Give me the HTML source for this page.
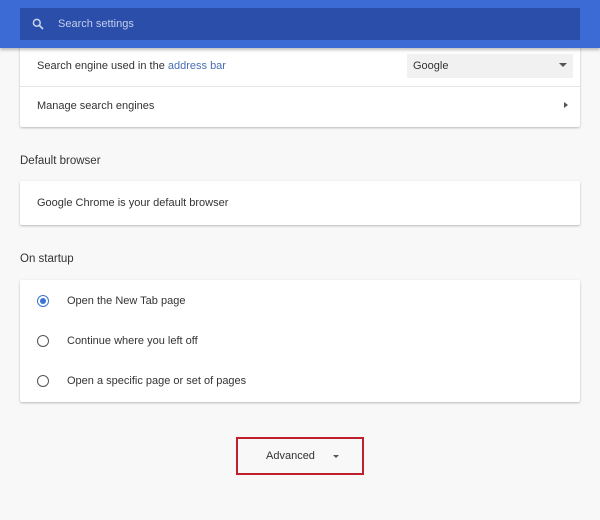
<!DOCTYPE html>
<html><head><style>
body{margin:0;width:600px;height:520px;background:#f8f8f8;font-family:"Liberation Sans",sans-serif;font-size:11px;color:#333;position:relative;overflow:hidden}
.hdr{position:absolute;left:0;top:0;width:600px;height:48px;background:#3d6bd6;box-shadow:0 2px 3px rgba(0,0,0,.25)}
.sb{position:absolute;left:20px;top:8px;width:560px;height:32px;background:#2a4ea9}
.sb span{position:absolute;left:38px;top:10px;color:#c3cfee;font-size:11px}
.card{position:absolute;left:20px;width:560px;background:#fff;box-shadow:0 1px 2px rgba(0,0,0,.25);border-radius:2px}
.t{position:absolute;left:17px}
.lbl{position:absolute;left:20px;font-size:11.5px;color:#333}
.radio{position:absolute;left:17px;width:10px;height:10px;border:1.5px solid #555;border-radius:50%}
</style></head><body>
<div class="card" style="top:44px;height:83px">
 <div class="t" style="top:16px">Search engine used in the <span style="color:#4a6fb5">address bar</span></div>
 <div style="position:absolute;left:387px;top:10px;width:166px;height:24px;background:#f1f1f1"><span style="position:absolute;left:6px;top:6px">Google</span><span style="position:absolute;right:6px;top:9px;border:4px solid transparent;border-top:4px solid #555"></span></div>
 <div style="position:absolute;left:0;top:42px;width:560px;height:1px;background:#e6e6e6"></div>
 <div class="t" style="top:56px">Manage search engines</div>
 <div style="position:absolute;left:544px;top:58px;border:3px solid transparent;border-left:4px solid #555"></div>
</div>
<div class="hdr"><div class="sb">
<svg style="position:absolute;left:12px;top:10px" width="12" height="12" viewBox="0 0 12 12"><circle cx="4.8" cy="4.8" r="3.4" fill="none" stroke="#c9d4f0" stroke-width="1.5"/><path d="M7.3 7.3L11 11" stroke="#c9d4f0" stroke-width="1.7"/></svg>
<span>Search settings</span></div></div>
<div class="lbl" style="top:155px">Default browser</div>
<div class="card" style="top:181px;height:44px"><div class="t" style="top:16px">Google Chrome is your default browser</div></div>
<div class="lbl" style="top:253px">On startup</div>
<div class="card" style="top:280px;height:122px">
 <div class="radio" style="top:15px;border-color:#3b74d1"><div style="margin:2px;width:6px;height:6px;border-radius:50%;background:#3b74d1"></div></div>
 <div class="t" style="left:47px;top:15px">Open the New Tab page</div>
 <div class="radio" style="top:55px"></div>
 <div class="t" style="left:47px;top:55px">Continue where you left off</div>
 <div class="radio" style="top:95px"></div>
 <div class="t" style="left:47px;top:95px">Open a specific page or set of pages</div>
</div>
<div style="position:absolute;left:236px;top:437px;width:124px;height:34px;border:2px solid #c0202b">
 <span style="position:absolute;left:28px;top:11px">Advanced</span>
 <span style="position:absolute;left:95px;top:16px;border:3px solid transparent;border-top:3px solid #555"></span>
</div>
</body></html>
